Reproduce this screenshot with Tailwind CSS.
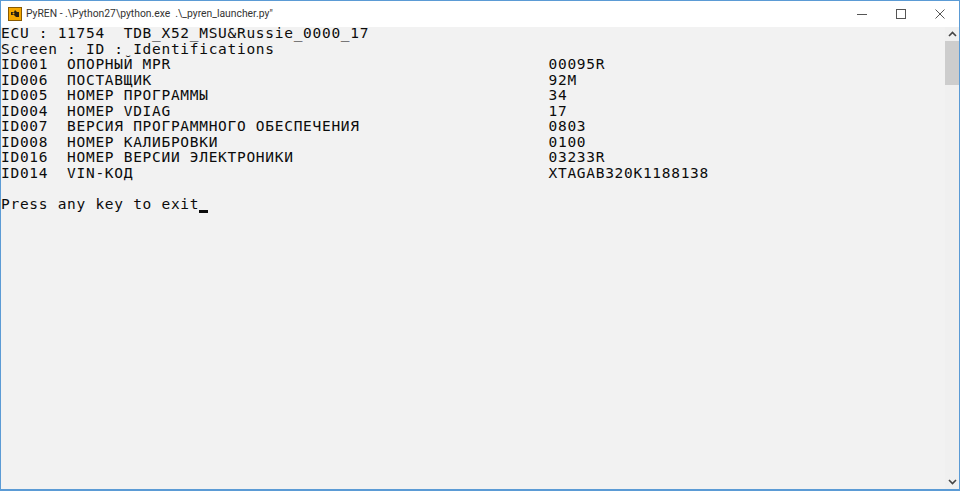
<!DOCTYPE html>
<html lang="en">
<head>
    <meta charset="UTF-8">
    <title>PyREN</title>
    <script src="https://cdn.jsdelivr.net/npm/@tailwindcss/browser@4"></script>
</head>
<body class="w-[960px] h-[491px] overflow-hidden bg-[#f2f2f2]">
    <div class="flex flex-col w-[960px] h-[491px] border border-[#5b9bd5] border-b-2 overflow-hidden">
        <!-- title bar -->
        <div class="flex items-center h-[26px] shrink-0 bg-white">
            <svg class="ml-[7px] w-[14px] h-[14px]" viewBox="0 0 14 14">
                <rect x="0.5" y="0.5" width="13" height="13" fill="#f5a800" stroke="#8a5a00"/>
                <path d="M3 5h3l1-2 2 2h2v5H8L6 8H3z" fill="#2a2010"/>
                <circle cx="5.5" cy="6.5" r="1" fill="#f5a800"/>
            </svg>
            <span class="ml-[4px] font-['Roboto','Noto_Sans',sans-serif] text-[10.35px] text-[#333] whitespace-pre">PyREN - .\Python27\python.exe  .\_pyren_launcher.py"</span>
            <div class="ml-auto flex items-center h-full">
                <svg class="w-[10px] h-[10px] mr-[29px]" viewBox="0 0 10 10"><path d="M0 5.5h10" stroke="#555" stroke-width="1"/></svg>
                <svg class="w-[10px] h-[10px] mr-[29px]" viewBox="0 0 10 10"><rect x="0.5" y="0.5" width="9" height="9" fill="none" stroke="#555"/></svg>
                <svg class="w-[10px] h-[10px] mr-[14px]" viewBox="0 0 10 10"><path d="M0.5 0.5l9 9M9.5 0.5l-9 9" stroke="#555" stroke-width="1"/></svg>
            </div>
        </div>
        <div class="flex flex-1 min-h-0">
            <!-- console -->
            <div class="flex flex-col flex-1 -mt-[1px] font-['DejaVu_Sans_Mono',monospace] text-[14.5px] tracking-[0.71px] leading-[15.55px] text-[#0c0c0c] whitespace-pre">
                <div>ECU : 11754  TDB_X52_MSU&amp;Russie_0000_17</div>
                <div>Screen : ID : Identifications</div>
                <div>ID001  ОПОРНЫЙ MPR                                        00095R</div>
                <div>ID006  ПОСТАВЩИК                                          92M</div>
                <div>ID005  НОМЕР ПРОГРАММЫ                                    34</div>
                <div>ID004  НОМЕР VDIAG                                        17</div>
                <div>ID007  ВЕРСИЯ ПРОГРАММНОГО ОБЕСПЕЧЕНИЯ                    0803</div>
                <div>ID008  НОМЕР КАЛИБРОВКИ                                   0100</div>
                <div>ID016  НОМЕР ВЕРСИИ ЭЛЕКТРОНИКИ                           03233R</div>
                <div>ID014  VIN-КОД                                            XTAGAB320K1188138</div>
                <div>&nbsp;</div>
                <div class="flex items-end">Press any key to exit<span class="w-[9px] h-[3px] bg-[#0c0c0c]"></span></div>
            </div>
            <!-- scrollbar -->
            <div class="flex flex-col w-[14px] shrink-0 bg-[#f0f0f0]">
                <div class="flex items-center justify-center h-[14px] shrink-0">
                    <svg class="w-[9px] h-[6px]" viewBox="0 0 9 6"><path d="M1 5l3.5-3.5L8 5" fill="none" stroke="#444" stroke-width="1.6"/></svg>
                </div>
                <div class="h-[44px] bg-[#cdcdcd]"></div>
                <div class="mt-auto flex items-center justify-center h-[15px] shrink-0">
                    <svg class="w-[9px] h-[6px]" viewBox="0 0 9 6"><path d="M1 1l3.5 3.5L8 1" fill="none" stroke="#444" stroke-width="1.6"/></svg>
                </div>
            </div>
        </div>
    </div>
</body>
</html>
